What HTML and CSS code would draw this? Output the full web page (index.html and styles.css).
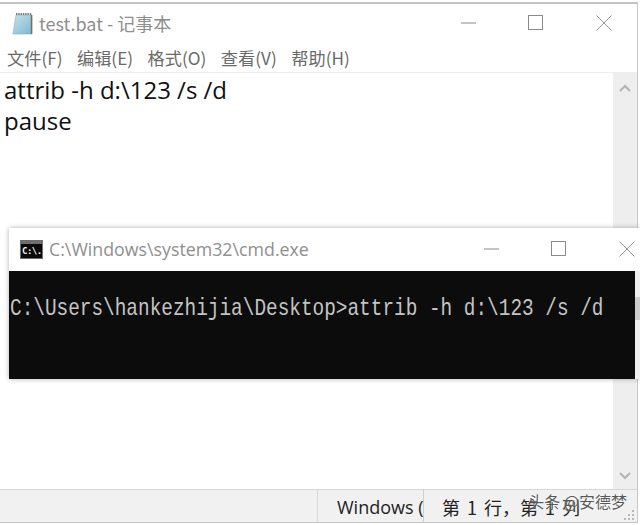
FILE: index.html
```html
<!DOCTYPE html>
<html lang="zh">
<head>
<meta charset="utf-8">
<title>test.bat - 记事本</title>
<link rel="stylesheet" href="styles.css">
</head>
<body>
<div class="notepad">
  <header class="titlebar">
    <div class="title-left">
      <svg class="np-icon" width="22" height="24" viewBox="0 0 22 24">
        <defs>
          <linearGradient id="pad" x1="0" y1="0" x2="1" y2="1">
            <stop offset="0" stop-color="#c3e3ee"/>
            <stop offset="1" stop-color="#7fb6cf"/>
          </linearGradient>
        </defs>
        <path d="M5 4H21V23H2Z" fill="url(#pad)" stroke="#8fa9b3" stroke-width="0.6"/>
        <path d="M20.5 4V23" stroke="#77705f" stroke-width="1.4"/>
        <path d="M5 3H21" stroke="#77787a" stroke-width="2" stroke-dasharray="1.4 0.9"/>
      </svg>
      <span class="np-title">test.bat - 记事本</span>
    </div>
    <div class="controls">
      <svg width="15" height="2" viewBox="0 0 15 2"><path d="M0 1H15" stroke="#8a8a8a"/></svg>
      <svg width="16" height="16" viewBox="0 0 16 16"><rect x=".5" y=".5" width="14" height="14" fill="none" stroke="#8a8a8a"/></svg>
      <svg width="16" height="16" viewBox="0 0 16 16"><path d="M.5 .5L15.500 15.500M15.500 .5L.5 15.500" stroke="#9a9a9a" fill="none"/></svg>
    </div>
  </header>
  <nav class="menubar">
    <span>文件(F)</span><span>编辑(E)</span><span>格式(O)</span><span>查看(V)</span><span>帮助(H)</span>
  </nav>
  <div class="editor">
    <pre class="text">attrib -h d:\123 /s /d
pause</pre>
    <div class="scrollbar">
      <svg width="12" height="8" viewBox="0 0 12 8"><path d="M1 7L6 2L11 7" fill="none" stroke="#b4b4b4" stroke-width="2"/></svg>
      <svg width="12" height="8" viewBox="0 0 12 8"><path d="M1 1L6 6L11 1" fill="none" stroke="#b4b4b4" stroke-width="2"/></svg>
    </div>
  </div>
  <footer class="statusbar">
    <div class="cell cell-blank"></div>
    <div class="cell cell-enc">Windows (</div>
    <div class="cell cell-pos">第 1 行，第 1 列</div>
    <svg class="grip" width="11" height="11" viewBox="0 0 11 11">
      <path d="M8 0h2v2H8zM4 4h2v2H4zM8 4h2v2H8zM0 8h2v2H0zM4 8h2v2H4zM8 8h2v2H8z" fill="#b8b8b8"/>
    </svg>
  </footer>
</div>

<div class="cmd">
  <header class="cmd-title">
    <div class="title-left">
      <svg class="cmd-icon" width="23" height="19" viewBox="0 0 23 19">
        <rect width="23" height="19" fill="#6f6f6f"/>
        <rect x="1" y="4" width="21" height="14" fill="#0a0a0a"/>
        <text x="2" y="14" class="cmd-glyph">C:\.</text>
      </svg>
      <span class="cmd-name">C:\Windows\system32\cmd.exe</span>
    </div>
    <div class="controls">
      <svg width="15" height="2" viewBox="0 0 15 2"><path d="M0 1H15" stroke="#8a8a8a"/></svg>
      <svg width="16" height="16" viewBox="0 0 16 16"><rect x=".5" y=".5" width="14" height="14" fill="none" stroke="#8a8a8a"/></svg>
      <svg width="16" height="16" viewBox="0 0 16 16"><path d="M.5 .5L15.500 15.500M15.500 .5L.5 15.500" stroke="#9a9a9a" fill="none"/></svg>
    </div>
  </header>
  <div class="cmd-body">
    <div class="console"><span class="console-line">C:\Users\hankezhijia\Desktop&gt;attrib -h d:\123 /s /d</span></div>
    <div class="cmd-scroll"><div class="cmd-thumb"></div></div>
  </div>
</div>

<div class="watermark">头条 @安德梦</div>
</body>
</html>
```
FILE: styles.css
```css
* { box-sizing: border-box; }
html, body { margin: 0; height: 100%; }
body {
  width: 640px;
  height: 525px;
  overflow: hidden;
  background: #fff;
  position: relative;
  font-family: "Noto Sans CJK SC", "Liberation Sans", sans-serif;
  padding: 2px 2px 2px 0;
}
.notepad {
  height: 100%;
  display: flex;
  flex-direction: column;
  border-top: 2px solid #c4c4c4;
  border-right: 1px solid #c8c8c8;
  border-bottom: 1px solid #c4c4c4;
  background: #fff;
}
.titlebar {
  height: 41px;
  flex: none;
  display: flex;
  align-items: center;
  justify-content: space-between;
  padding: 0 25px 3px 11px;
}
.title-left { display: flex; align-items: center; }
.np-icon { margin-right: 6px; }
.np-title {
  font-size: 18px;
  color: #8e8e8e;
}
.controls { display: flex; align-items: center; gap: 52px; }
.menubar {
  height: 28px;
  flex: none;
  display: flex;
  align-items: center;
  gap: 14.500px;
  padding: 0 0 2px 7px;
  font-size: 17.200px;
  color: #6a6a6a;
  border-bottom: 1px solid #ededed;
}
.editor { flex: 1; display: flex; min-height: 0; }
.text {
  flex: 1;
  margin: 0;
  padding: 2px 0 0 4px;
  font-family: "Open Sans", "Liberation Sans", sans-serif;
  font-size: 24px;
  line-height: 30.500px;
  color: #111;
}
.scrollbar {
  width: 24px;
  flex: none;
  background: #eeeeee;
  display: flex;
  flex-direction: column;
  justify-content: space-between;
  align-items: center;
  padding: 11px 0 9px;
}
.statusbar {
  height: 33px;
  flex: none;
  display: flex;
  position: relative;
  background: #f1f1f1;
  border-top: 1px solid #d6d6d6;
  font-size: 18px;
  color: #222;
}
.cell { display: flex; align-items: center; padding-top: 2px; white-space: nowrap; overflow: hidden; }
.cell-blank { width: 318px; border-right: 1px solid #d8d8d8; }
.cell-enc { width: 106px; padding-left: 19px; border-right: 1px solid #cfcfcf; font-family: "Open Sans", sans-serif; }
.cell-pos { padding-left: 18px; word-spacing: 3px; }
.grip {
  position: absolute;
  right: 2px;
  bottom: 1px;
}
.cmd {
  position: absolute;
  left: 9px;
  top: 228px;
  width: 631px;
  height: 151px;
  display: flex;
  flex-direction: column;
  background: #fff;
  box-shadow: 0 0 5px rgba(0,0,0,.3);
}
.cmd-title {
  height: 43px;
  flex: none;
  display: flex;
  align-items: center;
  justify-content: space-between;
  padding: 0 5px 1px 11px;
}
.cmd-icon { margin-right: 6px; }
.cmd-glyph {
  font-family: "DejaVu Sans Mono", monospace;
  font-size: 9px;
  font-weight: 700;
  letter-spacing: -.5px;
  fill: #f2f2f2;
}
.cmd-name {
  font-family: "Open Sans", sans-serif;
  font-size: 17.800px;
  color: #8f8f8f;
}
.cmd-body { flex: 1; display: flex; min-height: 0; }
.console {
  flex: 1;
  min-width: 0;
  background: #0c0c0c;
  padding: 24px 0 0 1px;
  overflow: hidden;
}
.console-line {
  display: block;
  width: 734.400px;
  color: #c4c4c4;
  font-family: "Liberation Mono", monospace;
  font-size: 24px;
  line-height: 28px;
  white-space: pre;
  transform: scaleX(.808);
  transform-origin: left top;
}
.cmd-scroll { width: 5px; flex: none; background: #f0f0f0; }
.cmd-thumb { width: 100%; height: 23px; margin-top: 26px; background: #cdcdcd; }
.watermark {
  position: absolute;
  right: 13px;
  bottom: 12px;
  font-size: 16px;
  color: rgba(60,60,60,.85);
  text-shadow: 0 0 2px #fff;
}
```
